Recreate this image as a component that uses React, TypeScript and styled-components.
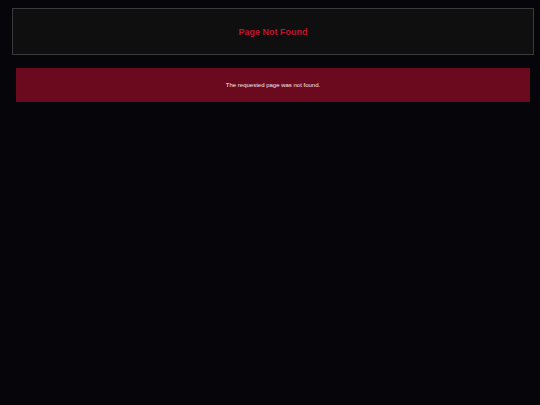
import React from "react";
import styled, { createGlobalStyle } from "styled-components";

const GlobalStyle = createGlobalStyle`
  html, body {
    margin: 0;
    padding: 0;
    background: #06060a;
    font-family: "Liberation Sans", Arial, sans-serif;
  }
  #root {
    min-height: 405px;
    background: #06060a;
  }
`;

const Page = styled.div`
  display: flex;
  flex-direction: column;
  padding: 8px 6px 0 12px;
  gap: 13px;
`;

const Header = styled.header`
  display: flex;
  align-items: center;
  justify-content: center;
  height: 45px;
  background: #0f0f10;
  border: 1px solid #3a3a3c;
`;

const Title = styled.h1`
  margin: 0;
  font-size: 9px;
  font-weight: bold;
  color: #c0122f;
`;

const Alert = styled.div`
  display: flex;
  align-items: center;
  justify-content: center;
  height: 34px;
  margin: 0 4px;
  background: #6b0a1e;
  color: #f2e6e8;
  font-size: 6px;
`;

export default function App() {
  return (
    <>
      <GlobalStyle />
      <Page>
        <Header>
          <Title>Page Not Found</Title>
        </Header>
        <Alert>The requested page was not found.</Alert>
      </Page>
    </>
  );
}
